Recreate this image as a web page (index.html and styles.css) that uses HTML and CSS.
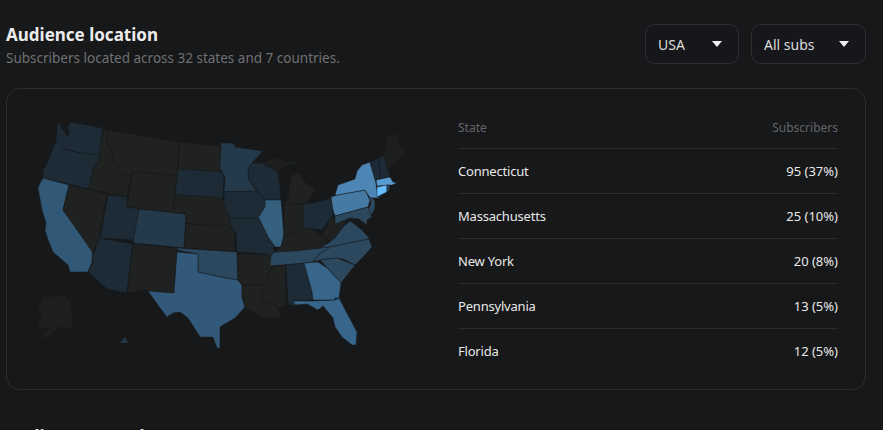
FILE: index.html
```html
<!DOCTYPE html>
<html lang="en">
<head>
<meta charset="utf-8">
<title>Audience location</title>
<link rel="stylesheet" href="styles.css">
</head>
<body>
<main class="page">
  <header class="head">
    <div class="titles">
      <h2 class="title">Audience location</h2>
      <p class="sub">Subscribers located across 32 states and 7 countries.</p>
    </div>
    <div class="filters">
      <button class="select sel-country"><span>USA</span><i class="caret"></i></button>
      <button class="select sel-subs"><span>All subs</span><i class="caret"></i></button>
    </div>
  </header>
  <section class="card">
    <svg class="map" viewBox="24 106 400 264" width="400" height="264" aria-label="US map">
      <g class="states">
        <path class="c1" d="M57 123l3 1 2 5 3 3 2 4 2-3-1-6 2-5 33 6-1 9-3 18-19-2-17-4-5-1-2-6z"/>
        <path class="c1" d="M58 142l5 7 17 4 19 2 1 5-6 7-5 22-46-11 0-8 4-7 4-9 3-9z"/>
        <path class="ca" d="M43 178l26 7-6 25 30 40-1 12-4 10-18 0-2-7-15-13-5-12-3-10 1-7-4-13-4-22 2-5z"/>
        <path class="g" d="M69 185l38 9-9 49-2 1-3 9-2-3-28-40z"/>
        <path class="g" d="M103 129l5 1-1 12 6 13 0 7 5 5 3 7 11 1-5 22-38-8 5-22 6-7-1-5z"/>
        <path class="g" d="M108 130l71 12-2 34-44-5-1 4-11-1-3-7-5-5 0-7-6-13z"/>
        <path class="g" d="M133 171l44 5-4 37-46-6z"/>
        <path class="c1" d="M108 195l19 2 0 10 12 2-4 31-35-2z"/>
        <path class="c2" d="M139 209l47 5-2 34-51-5z"/>
        <path class="c1" d="M99 238l34 6-6 49-20-4-19-17 5-10-1-9 2 0 3-9z"/>
        <path class="g" d="M133 244l44 4-3 45-26-2-2-1-10 1-1 1-8 1z"/>
        <path class="g" d="M179 142l41 4 3 26-45-3z"/>
        <path class="c1" d="M178 169l45 3 1 8-1 19-8-2-40-2z"/>
        <path class="g" d="M175 195l40 2 8 2 5 9 4 16 1 4-47-5 0-10-13 0z"/>
        <path class="g" d="M186 224l43 2 5 6 1 19-51-3z"/>
        <path class="c3" d="M177 248l60 4 1 28-13-2-27-6 0-18-21-4z"/>
        <path class="tx" d="M177 252l21 2 0 18 27 6 13 2 4 5 0 12 3 10-10 11-12 7-3 2 0 21-3 0-4-11-13 0-12-19-8-6-7 1-6 4-7-9-12-17 26 2z"/>
        <path class="c2" d="M221 143l12 0 2 4 28 4-11 12-4 7 1 10 8 11-33 1 1-14-5-11z"/>
        <path class="c1" d="M252 163l10 0 16 9 2 15 1 13-16 0-8-9-8-11-1-10z"/>
        <path class="c1" d="M224 192l33-1 8 9 1 7-7 11-29 0-6-15z"/>
        <path class="il" d="M265 200l16 0 3 35-3 12-6 0-7-10-10-19 7-11z"/>
        <path class="c1" d="M230 218l29 0 9 19 7 10-2 1 2 4-4 3-1 3-3-4-30-2-1-19-5-6z"/>
        <path class="g" d="M237 254l35 1 0 12-9 18-21 0-4-5z"/>
        <path class="g" d="M242 285l22 0-3 17 14 0 2 5 5 10-19 1-18-11-3-10z"/>
        <path class="g" d="M272 267l13-2 1 40-9 3-2-6-14 0 2-17 9-18z"/>
        <path class="c1" d="M286 265l18-2 8 29 1 8-20 1 2 4-7 0z"/>
        <path class="c3" d="M271 255l4-3 55-5-3 3-7 3-7 9-9 1-34 3z"/>
        <path class="g" d="M275 252l6-5 3-12 14-3 5-4 10 1 9 7 6 5-8 7-25 3z"/>
        <path class="g" d="M284 205l19-1 0 24-5 4-14 3z"/>
        <path class="c1" d="M303 204l10-1 19-5 1 17-11 15-19-2z"/>
        <path class="g" d="M292 175l8-2 7 12 8 3 0 3-8 12-23 2 4-8 2-14z"/>
        <path class="m" d="M262 163l11-5 27 5-12 2-10 7z"/>
        <path class="g" d="M322 235l11-20 2 8 13-6-5 10-8 11-5 4z"/>
        <path class="c3" d="M320 248l10-6 5-4 8-11 7-6 7 5 5 4 6 7 1 2-39 8z"/>
        <path class="c3" d="M330 247l39-8 3 8-7 8-10 10-12-6-6-1-17 2-7 2 7-9 7-3z"/>
        <path class="c3" d="M320 260l17-2 18 7-14 18-14-15z"/>
        <path class="fl" d="M304 263l14-1 9 6 14 15-2 15-4 0 0 2-22 0-1-8z"/>
        <path class="fl" d="M293 301l20 0 22-1 4-2 9 17 9 17-1 13-4 0-10-8-7-10-2-9-10-12-5 4-11-6-12 1z"/>
        <path class="pa" d="M331 197l6-2 28-5 5 10-2 7-33 9-2-6z"/>
        <path class="ny" d="M335 195l3-10 17-6 2-8 5-6 8-3 5 16 3 18 1 2-9 0-5-8-28 5z"/>
        <path class="c3" d="M368 196l7 4 0 8-3 7-4-5 3-7z"/>
        <path class="c3" d="M335 216l33-9 4 10-5 3 0 5-8-6-9-1-15 6z"/>
        <path class="c1" d="M370 162l9-4 1 20-5 2z"/>
        <path class="c1" d="M379 158l6-3 5 22-10 2z"/>
        <path class="m" d="M384 157l3-20 8-4 7 16 5 3-17 15 0 10z"/>
        <path class="ma" d="M376 180l14-3 3 5 4 1-5 2-15 1z"/>
        <path class="ct" d="M377 187l10-2 0 7-10 5z"/>
        <path class="c3" d="M387 185l3 0-1 6-2 1z"/>
        <path class="pa" d="M377 198l6-3-6 4z"/>
      </g>
      <path class="ak" d="M43 298l20-3 8 7 1 26-14-1-6 7-11 5-1-2 12-9-15-1 5-10-4-9 4-6z"/>
      <path class="ak2" d="M58 327l6-2 10 6 13 12"/>
      <path class="c2 hi" d="M120 343l5-6 3 6z"/>
    </svg>
    <div class="tbl">
      <div class="row hdr"><span>State</span><span>Subscribers</span></div>
      <div class="row"><span class="name">Connecticut</span><span>95 (37%)</span></div>
      <div class="row"><span class="name">Massachusetts</span><span>25 (10%)</span></div>
      <div class="row"><span class="name">New York</span><span>20 (8%)</span></div>
      <div class="row"><span class="name">Pennsylvania</span><span>13 (5%)</span></div>
      <div class="row"><span class="name">Florida</span><span>12 (5%)</span></div>
    </div>
  </section>
  <h2 class="title next">Audience growth</h2>
</main>
</body>
</html>
```
FILE: styles.css
```css
* { box-sizing: border-box; }
html, body { margin: 0; height: 430px; overflow: hidden; background: #17181a; }
body { font-family: "Noto Sans", "Open Sans", sans-serif; color: #e6e6e6; }
.page { width: 860px; margin-left: 6px; padding-top: 24px; }
.head { display: flex; justify-content: space-between; align-items: flex-start; height: 64px; }
.titles { padding-top: 1px; }
.title { margin: 0; font-size: 17px; line-height: 20px; font-weight: 700; color: #ececec; }
.sub { margin: 4px 0 0; font-size: 13.5px; line-height: 18px; color: #6f7173; }
.filters { display: flex; gap: 12px; }
.select { display: flex; align-items: center; justify-content: space-between; height: 40px; padding: 0 16px 0 12px; background: #16171a; border: 1px solid #2c2e30; border-radius: 10px; color: #dcdcdc; font: 14px "Noto Sans", sans-serif; }
.sel-country { width: 94px; }
.sel-subs { width: 115px; }
.caret { width: 0; height: 0; border-left: 5px solid transparent; border-right: 5px solid transparent; border-top: 6px solid #f0f0f0; }
.card { display: flex; height: 302px; border: 1px solid #2c2e30; border-radius: 14px; }
.map { flex: none; margin: 17px 0 0 17px; display: block; }
.states path { stroke: #16181a; stroke-width: .5; stroke-linejoin: round; }
.g { fill: #202221; }
.m { fill: #1d1f1f; }
.c1 { fill: #1c2b36; }
.c2 { fill: #243949; }
.c3 { fill: #2c485f; }
.ca { fill: #315877; }
.tx { fill: #33597a; }
.il { fill: #36607f; }
.fl { fill: #38658a; }
.pa { fill: #477aa3; }
.ny { fill: #4d86b5; }
.ma { fill: #5a9bd0; }
.ct { fill: #66bdff; }
.ak { fill: #1d1f1e; }
.ak2 { fill: none; stroke: #1c1e1e; stroke-width: 1; }
.tbl { flex: none; width: 380px; margin-left: 34px; padding-top: 16px; }
.row { display: flex; justify-content: space-between; align-items: center; height: 45px; border-top: 1px solid #2a2c2e; font-size: 13px; color: #e8e8e8; }
.name { letter-spacing: -.2px; }
.hdr { height: 43px; padding-top: 2px; border-top: 0; font-size: 12px; color: #636567; }
.next { margin-top: 37px; }
```
